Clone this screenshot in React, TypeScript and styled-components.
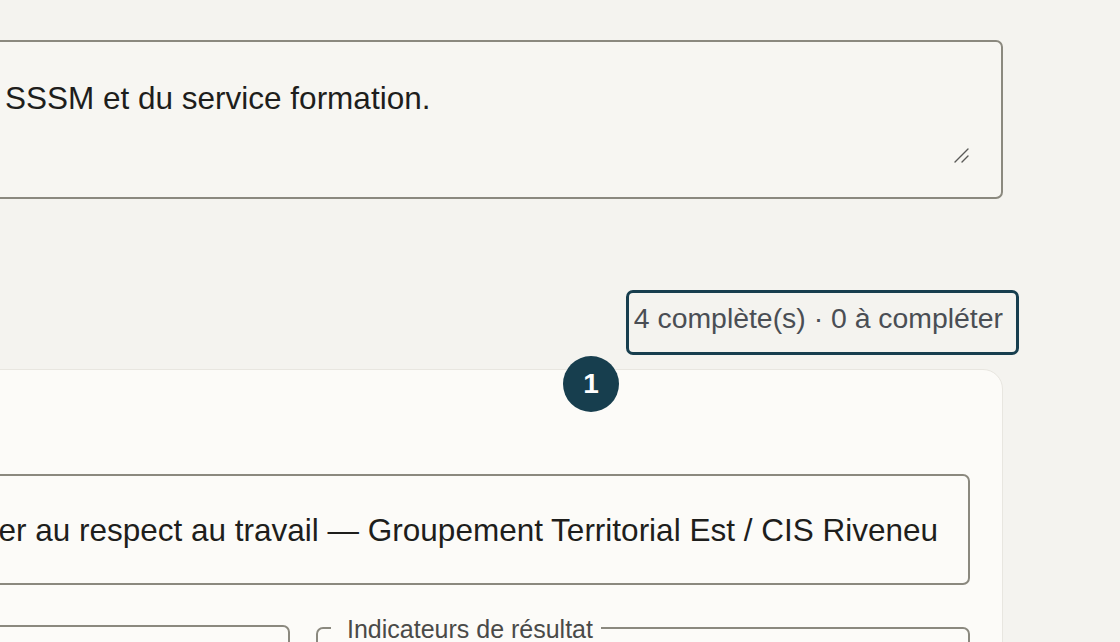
import React from "react";
import styled, { createGlobalStyle } from "styled-components";

const GlobalStyle = createGlobalStyle`
  html, body {
    margin: 0;
    padding: 0;
    background: #f4f3ef;
    overflow: hidden;
  }
  body {
    font-family: "Liberation Sans", Arial, sans-serif;
    color: #1e1e1c;
  }
`;

const Page = styled.main`
  display: flex;
  flex-direction: column;
  width: 1063px;
  margin-left: -60px;
  padding-top: 40px;
  box-sizing: border-box;
`;

const TextArea = styled.div`
  position: relative;
  height: 159px;
  box-sizing: border-box;
  border: 2px solid #8b897f;
  border-radius: 7px;
  background: #f7f6f2;
  padding: 32px 40px 0 63px;
  font-size: 31.5px;
  line-height: 48px;
  white-space: nowrap;
  overflow: hidden;
`;

const Grip = styled.svg`
  position: absolute;
  right: 32px;
  bottom: 34px;
  width: 16px;
  height: 16px;
`;

const StatusRow = styled.div`
  display: flex;
  justify-content: flex-end;
  margin-top: 91px;
`;

const Status = styled.div`
  display: flex;
  align-items: center;
  height: 65px;
  box-sizing: border-box;
  margin-right: -16px;
  padding: 0 13px 8px 5px;
  border: 3px solid #173e4e;
  border-radius: 7px;
  font-size: 28.4px;
  line-height: 1;
  color: #4a4e54;
  white-space: nowrap;
`;

const Card = styled.section`
  position: relative;
  margin-top: 14px;
  padding: 104px 32px 0 32px;
  border: 1px solid #e8e6e0;
  border-radius: 20px;
  background: #fcfbf8;
  height: 400px;
`;

const StepBadge = styled.div`
  position: absolute;
  top: -14px;
  left: 622px;
  width: 56px;
  height: 56px;
  border-radius: 50%;
  background: #173e4e;
  color: #ffffff;
  display: flex;
  align-items: center;
  justify-content: center;
  font-size: 28px;
  font-weight: 700;
`;

const TitleInput = styled.div`
  display: flex;
  align-items: center;
  justify-content: flex-end;
  height: 111px;
  box-sizing: border-box;
  border: 2px solid #8b897f;
  border-radius: 7px;
  padding: 2px 30px 0 0;
  overflow: hidden;
  font-size: 31.5px;
  white-space: nowrap;

  span {
    flex-shrink: 0;
  }
`;

const FieldRow = styled.div`
  display: grid;
  grid-template-columns: 317px 1fr;
  column-gap: 26px;
  align-items: start;
  margin-top: 26px;
`;

const PlainField = styled.div`
  margin-top: 14px;
  height: 120px;
  border: 2px solid #8b897f;
  border-radius: 7px;
`;

const Group = styled.fieldset`
  margin: 0;
  padding: 0 13px;
  min-width: 0;
  height: 130px;
  border: 2px solid #8b897f;
  border-radius: 7px;
`;

const GroupLegend = styled.legend`
  padding: 4px 8px 0 16px;
  font-size: 25px;
  color: #4a4a48;
`;

export default function App() {
  return (
    <>
      <GlobalStyle />
      <Page>
        <TextArea>
          SSSM et du service formation.
          <Grip viewBox="0 0 16 16" aria-hidden="true">
            <path
              d="M2 15 L15 2 M9 15 L15 9"
              stroke="#5a5a58"
              strokeWidth="1.4"
              strokeLinecap="round"
              fill="none"
            />
          </Grip>
        </TextArea>

        <StatusRow>
          <Status>4 complète(s) · 0 à compléter</Status>
        </StatusRow>

        <Card>
          <StepBadge>1</StepBadge>
          <TitleInput>
            <span>
              Sensibiliser au respect au travail — Groupement Territorial Est / CIS Riveneu
            </span>
          </TitleInput>
          <FieldRow>
            <PlainField />
            <Group>
              <GroupLegend>Indicateurs de résultat</GroupLegend>
            </Group>
          </FieldRow>
        </Card>
      </Page>
    </>
  );
}
